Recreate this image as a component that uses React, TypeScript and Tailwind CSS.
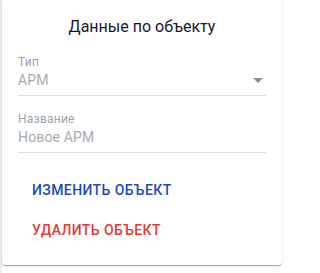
import React from "react";

const fields = [
  { label: "Тип", value: "АРМ", select: true },
  { label: "Название", value: "Новое АРМ", select: false },
];

const ObjectCard = () => {
  return (
    <div className="w-[280px] bg-white rounded-[4px] shadow-[0_2px_1px_-1px_rgba(0,0,0,0.2),0_1px_1px_0_rgba(0,0,0,0.14),0_1px_3px_0_rgba(0,0,0,0.12)] px-4 pt-[15px] pb-[17px]">
      <h2 className="text-center text-[16px] leading-6 text-[#15182b]">Данные по объекту</h2>

      <div className="mt-[15px] flex flex-col gap-[15px]">
        {fields.map((f) => (
          <div key={f.label} className="flex flex-col">
            <span className="text-[12px] leading-4 tracking-[0.02em] text-[#9ea1a8]">{f.label}</span>
            <div className="relative border-b border-[#dedfe3] pb-[5px]">
              <span className="block text-[14px] leading-5 text-[#a9a9ad] tracking-[0.01em]">{f.value}</span>
              {/* arrow for select */}
              {f.select && (
                <svg viewBox="0 0 24 24" className="absolute right-[-4px] top-[-2px] w-6 h-6 fill-[#8d8d8d]">
                  <path d="M7 10l5 5 5-5z" />
                </svg>
              )}
            </div>
          </div>
        ))}
      </div>

      <div className="mt-[19px] flex flex-col gap-1 items-start pl-[6px]">
        <button className="h-9 px-2 text-[14px] leading-6 font-medium uppercase tracking-[0.02857em] text-[#1b4cb6]">
          Изменить объект
        </button>
        <button className="h-9 px-2 text-[14px] leading-6 font-medium uppercase tracking-[0.02857em] text-[#e53935]">
          Удалить объект
        </button>
      </div>
    </div>
  );
};

export default function App() {
  return (
    <div className="flex items-start min-h-[273px] bg-white font-['Roboto',sans-serif]">
      <div className="w-[2px] self-stretch bg-[#ececf3]" />
      <ObjectCard />
    </div>
  );
}
